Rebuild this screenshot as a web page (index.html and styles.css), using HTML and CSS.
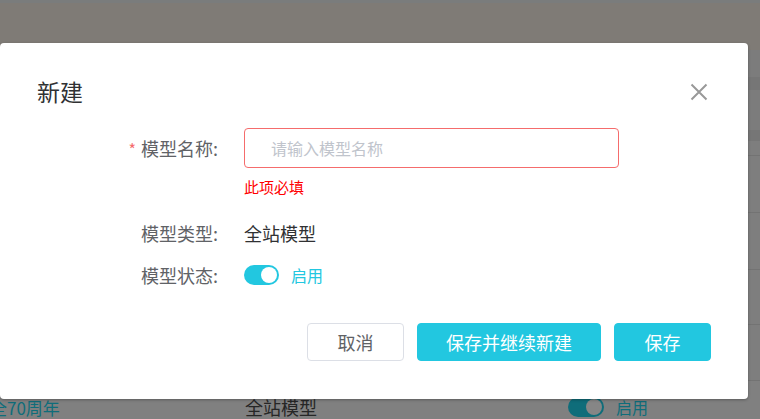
FILE: index.html
```html
<!DOCTYPE html>
<html lang="zh-CN">
<head>
<meta charset="utf-8">
<title>新建</title>
<link rel="stylesheet" href="styles.css">
</head>
<body>
<div class="page">
  <div class="page-top"></div>
  <div class="page-header"></div>
  <div class="page-gap1"></div>
  <div class="page-band b1"></div>
  <div class="page-gap2"></div>
  <div class="page-band b2"></div>
  <div class="trow r0"></div>
  <div class="trow r1"></div>
  <div class="trow r2"></div>
  <div class="trow r3"></div>
  <div class="trow r4"></div>
  <div class="trow last">
    <div class="cell c1">全70周年</div>
    <div class="cell c2">全站模型</div>
    <div class="cell c3"><span class="bg-switch"><span class="bg-knob"></span></span><span class="bg-on">启用</span></div>
  </div>
</div>

<div class="dialog">
  <div class="dlg-header">
    <span class="dlg-title">新建</span>
    <svg class="dlg-close" width="18" height="18" viewBox="0 0 18 18"><path d="M1.5 1.5 L16.5 16.5 M16.5 1.5 L1.5 16.5" stroke="#999" stroke-width="2" fill="none"/></svg>
  </div>
  <div class="form">
    <div class="frow">
      <div class="flabel"><span class="req">*</span>模型名称:</div>
      <div class="fcontent">
        <div class="finput">请输入模型名称</div>
        <div class="ferror">此项必填</div>
      </div>
    </div>
    <div class="frow plain r-type">
      <div class="flabel">模型类型:</div>
      <div class="fvalue">全站模型</div>
    </div>
    <div class="frow plain">
      <div class="flabel">模型状态:</div>
      <div class="fvalue"><span class="switch"><span class="knob"></span></span><span class="on-text">启用</span></div>
    </div>
  </div>
  <div class="dlg-footer">
    <div class="btn btn-default">取消</div>
    <div class="btn btn-primary wide">保存并继续新建</div>
    <div class="btn btn-primary">保存</div>
  </div>
</div>
</body>
</html>
```

FILE: styles.css
```css
* { box-sizing: border-box; }
html, body { margin: 0; padding: 0; }
body {
  width: 760px;
  height: 419px;
  overflow: hidden;
  background: #808080;
  font-family: "Noto Sans CJK SC", "Noto Sans", sans-serif;
  position: relative;
}
.page { width: 760px; }
.page-top { height: 3px; background: #7a7c7c; }
.page-header { height: 47px; background: #7f7b76; }
.page-gap1 { height: 27px; background: #7c7c7c; }
.page-band { background: #767676; }
.b1 { height: 13px; }
.page-gap2 { height: 40px; background: #7c7c7c; }
.b2 { height: 11px; }
.trow { border-bottom: 1px solid #737373; background: #7e7e7e; }
.r0 { height: 15px; }
.r1 { height: 57px; }
.r2 { height: 57px; }
.r3 { height: 55px; }
.r4 { height: 56px; }
.trow.last {
  height: 52px;
  border-bottom: none;
  background: #808080;
  display: flex;
  align-items: center;
  font-size: 18px;
}
.cell { white-space: nowrap; }
.c1 { color: #0f6d7a; margin-left: -10px; width: 255px; font-size: 17px; }
.c2 { color: #262626; width: 323px; }
.c3 { display: flex; align-items: center; color: #0f6d7a; }
.bg-switch {
  width: 36px; height: 20px; border-radius: 10px; background: #0f6d7a;
  display: flex; align-items: center; justify-content: flex-end; padding-right: 2px;
}
.bg-knob { width: 16px; height: 16px; border-radius: 50%; background: #868686; }
.bg-on { margin-left: 12px; font-size: 16px; }

.dialog {
  position: absolute;
  left: 0;
  top: 43px;
  width: 748px;
  height: 356px;
  background: #fff;
  border-radius: 4px;
  box-shadow: 0 1px 3px rgba(0,0,0,0.3);
  padding: 0 37px;
}
.dlg-header {
  padding-top: 33px;
  height: 63px;
  display: flex;
  align-items: flex-start;
  justify-content: space-between;
}
.dlg-title { font-size: 23px; line-height: 30px; color: #303133; }
.dlg-close { margin-top: 7px; margin-right: 3px; }
.form { margin-top: 22px; }
.frow { display: flex; align-items: flex-start; }
.flabel {
  width: 181px;
  flex: none;
  text-align: right;
  font-size: 18px;
  line-height: 40px;
  color: #606266;
  white-space: nowrap;
}
.req { color: #f56c6c; margin-right: 5px; font-size: 16px; }
.fcontent { margin-left: 26px; }
.finput {
  width: 375px;
  height: 40px;
  border: 1px solid #f56c6c;
  border-radius: 4px;
  padding-left: 26px;
  font-size: 16px;
  line-height: 38px;
  color: #c0c4cc;
}
.ferror {
  margin-top: 9px;
  font-size: 15px;
  line-height: 20px;
  color: #f00;
}
.frow.plain { height: 42px; align-items: center; }
.frow.plain .flabel { line-height: 42px; }
.r-type { margin-top: 15px; }
.fvalue {
  margin-left: 26px;
  font-size: 18px;
  color: #303133;
  display: flex;
  align-items: center;
}
.switch {
  width: 35px; height: 20px; border-radius: 10px; background: #22c7e0;
  display: flex; align-items: center; justify-content: flex-end; padding-right: 2px;
}
.knob { width: 16px; height: 16px; border-radius: 50%; background: #fff; }
.on-text { margin-left: 12px; font-size: 16px; color: #22c7e0; }
.dlg-footer {
  margin-top: 27px;
  display: flex;
  justify-content: flex-end;
  gap: 13px;
}
.btn {
  height: 38px;
  width: 97px;
  border-radius: 4px;
  font-size: 18px;
  line-height: 36px;
  text-align: center;
  border: 1px solid transparent;
}
.btn.wide { width: 184px; }
.btn-default { border-color: #dcdfe6; color: #606266; background: #fff; }
.btn-primary { background: #22c7e0; border-color: #22c7e0; color: #fff; }
```
